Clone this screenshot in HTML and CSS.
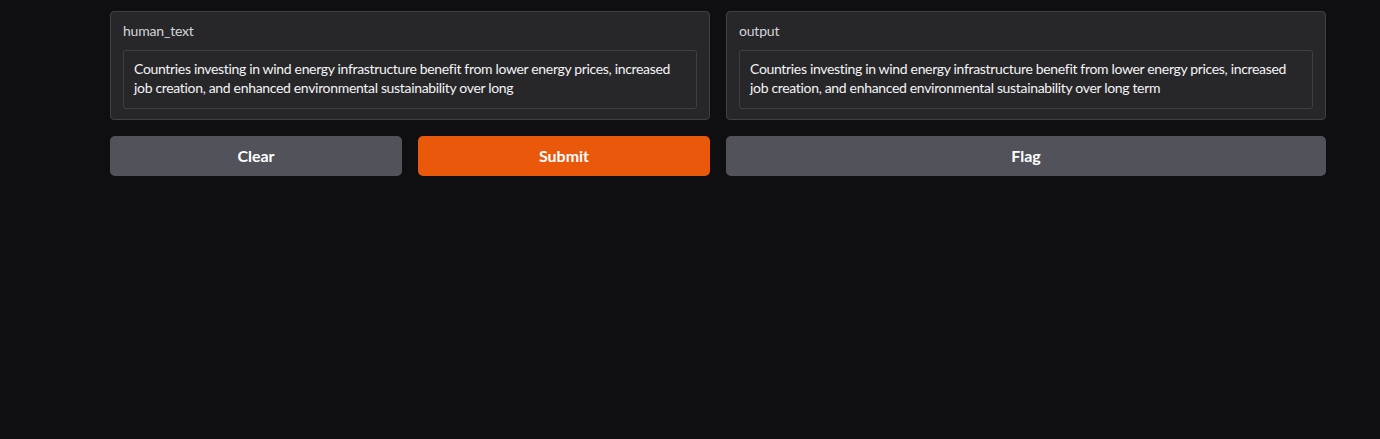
FILE: index.html
```html
<!DOCTYPE html>
<html>
<head>
<meta charset="utf-8">
<link rel="stylesheet" href="styles.css">
</head>
<body>
<div class="app">
  <div class="col">
    <div class="block">
      <div class="label">human_text</div>
      <div class="box">Countries investing in wind energy infrastructure benefit from lower energy prices, increased job creation, and enhanced environmental sustainability over long</div>
    </div>
    <div class="btns">
      <button class="btn secondary">Clear</button>
      <button class="btn primary">Submit</button>
    </div>
  </div>
  <div class="col">
    <div class="block">
      <div class="label">output</div>
      <div class="box">Countries investing in wind energy infrastructure benefit from lower energy prices, increased job creation, and enhanced environmental sustainability over long term</div>
    </div>
    <div class="btns">
      <button class="btn secondary">Flag</button>
    </div>
  </div>
</div>
</body>
</html>
```

FILE: styles.css
```css
html, body {
  margin: 0;
  padding: 0;
  background: #0f0f11;
  height: 100%;
}
body {
  font-family: "Source Sans Pro", Lato, "Liberation Sans", sans-serif;
  color: #e4e4e7;
}
.app {
  display: flex;
  gap: 16px;
  padding: 11px 0 0 110px;
  width: 1216px;
}
.col {
  flex: 1;
  display: flex;
  flex-direction: column;
  gap: 16px;
}
.block {
  background: #27272a;
  border: 1px solid #3f3f46;
  border-radius: 4px;
  padding: 10px 12px 10px;
  height: 109px;
  box-sizing: border-box;
}
.label {
  font-size: 14px;
  line-height: 18px;
  letter-spacing: -0.2px;
  color: #d4d4d8;
  margin-bottom: 10px;
}
.box {
  border: 1px solid #3f3f46;
  border-radius: 3px;
  padding: 8px 10px;
  font-size: 14px;
  line-height: 19px;
  letter-spacing: -0.33px;
  color: #f4f4f5;
  height: 59px;
  box-sizing: border-box;
}
.btns {
  display: flex;
  gap: 16px;
}
.btn {
  flex: 1;
  height: 40px;
  padding: 0 0 2px;
  border: none;
  border-radius: 5px;
  font-family: inherit;
  font-size: 16px;
  font-weight: 700;
  color: #ffffff;
  cursor: pointer;
}
.secondary {
  background: #52525b;
}
.primary {
  background: #ea580c;
}
```
